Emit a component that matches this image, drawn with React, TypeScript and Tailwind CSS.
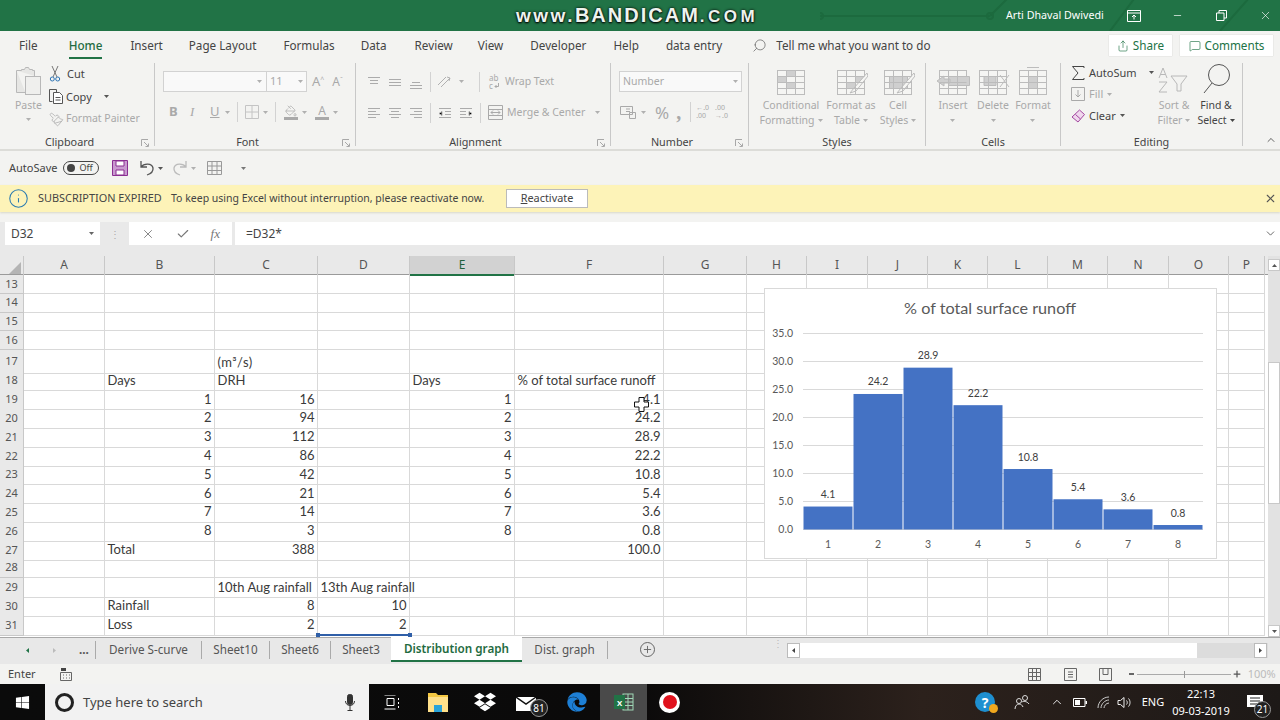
import type { ReactNode } from 'react'
import { Check, ChevronDown, ChevronUp, Info, MessageSquare, Minus, PaintBucket, Paintbrush, Plus, Search, Share, X } from 'lucide-react'
import { FaDropbox, FaEdge, FaWindows } from 'react-icons/fa'

const ui = "font-['Noto_Sans',sans-serif]"
const cellFont = "font-['Lato',sans-serif]"

function Caret({ className = 'text-[#b0b0b0]' }: { className?: string }) {
  return (
    <svg width="5" height="3" viewBox="0 0 5 3" className={`shrink-0 fill-current ${className}`}>
      <path d="M0 0h5L2.5 3z" />
    </svg>
  )
}

function Launcher() {
  return (
    <svg width="8" height="8" viewBox="0 0 8 8" className="absolute bottom-[-1px] right-[5px] fill-none stroke-[#a8a8a8]">
      <path d="M.5 7V.5H7M3 3l4 4M4.5 7.5h3v-3" />
    </svg>
  )
}

function Group({ label, width, launcher, children }: { label: string; width: string; launcher?: boolean; children: ReactNode }) {
  return (
    <div className={`relative h-[83px] shrink-0 border-r border-[#c8c8c8] ${width}`}>
      <div className="flex h-[72px]">{children}</div>
      <div className={`h-[14px] text-center text-[10.8px] leading-[14px] text-[#444] ${launcher ? 'pr-[15px]' : ''}`}>{label}</div>
      {launcher && <Launcher />}
    </div>
  )
}

function Lines({ rows }: { rows: string[] }) {
  return (
    <svg width="14" height="14" viewBox="0 0 14 14" className="shrink-0 stroke-[#ababab]">
      {rows.map((d, i) => (
        <path key={i} d={d} />
      ))}
    </svg>
  )
}

const alignLeft = ['M1 2.5h12', 'M1 5.5h8', 'M1 8.5h12', 'M1 11.5h8']
const alignCenter = ['M1 2.5h12', 'M3 5.5h8', 'M1 8.5h12', 'M3 11.5h8']
const alignRight = ['M1 2.5h12', 'M5 5.5h8', 'M1 8.5h12', 'M5 11.5h8']

// grey spreadsheet glyph used by the disabled Styles and Cells buttons
function SheetIcon({ children }: { children?: ReactNode }) {
  return (
    <svg width="34" height="28" viewBox="0 0 34 28" className="shrink-0 fill-none stroke-[#bcbcbc]">
      <rect x="3.5" y="3.5" width="27" height="24" fill="#f5f5f3" />
      {children}
      <path d="M3.5 9.5h27M3.5 15.5h27M3.5 21.5h27M12.5 3.5v24M21.5 3.5v24" />
    </svg>
  )
}

function BigButton({ lines, icon, width, margin = '', dark }: { lines: string[]; icon: ReactNode; width: string; margin?: string; dark?: boolean }) {
  return (
    <div className={`flex flex-col items-center ${width} ${margin}`}>
      <div className="flex h-[32px] items-end">{icon}</div>
      <div className={`mt-[3px] text-center text-[10.5px] leading-[15px] whitespace-nowrap ${dark ? 'text-[#444]' : 'text-[#a9a9a9]'}`}>
        {lines.map((l, i) => (
          <div key={i} className="flex h-[15px] items-center justify-center gap-[3px]">
            {l}
            {i === lines.length - 1 && <Caret className={dark ? 'text-[#444]' : 'text-[#b0b0b0]'} />}
          </div>
        ))}
      </div>
    </div>
  )
}

function TitleBar() {
  return (
    <div className="relative flex h-[31px] shrink-0 items-center bg-[#217346] text-white">
      <svg width="460" height="31" viewBox="0 0 460 31" className="absolute right-0 top-0 fill-none stroke-[#1c6a3e] stroke-2">
        <path d="M0 16h170M170 16l30-30M290 31l30-40M400 31l30-34" />
        <circle cx="0" cy="16" r="3" />
        <circle cx="170" cy="16" r="3" />
      </svg>
      <div className="relative ml-[516px] w-[250px] whitespace-nowrap font-['Liberation_Sans',sans-serif] font-bold leading-[31px] text-[#eef3ee] [text-shadow:0_0_3px_#000,0_1px_2px_#000]">
        <span className="text-[19px] tracking-[2.5px]">www.</span>
        <span className="text-[20px] tracking-[2px]">BANDICAM</span>
        <span className="text-[17px] tracking-[3.5px]">.COM</span>
      </div>
      <span className={`${ui} absolute left-[1006px] text-[10.7px]`}>Arti Dhaval Dwivedi</span>
      <svg width="14" height="12" viewBox="0 0 14 12" className="absolute left-[1127px] fill-none stroke-white">
        <path d="M.5.5h13v11H.5zM.5 3h13M7 9.5V5M5 7l2-2 2 2" />
      </svg>
      <Minus className="absolute left-[1172px] h-[11px] w-[11px]" strokeWidth={1.5} />
      <svg width="11" height="11" viewBox="0 0 11 11" className="absolute left-[1216px] fill-none stroke-white">
        <path d="M.5 3h7.5v7.5H.5zM3 3V.5h7.5V8H8" />
      </svg>
      <X className="absolute left-[1259px] h-[13px] w-[13px]" strokeWidth={1.2} />
    </div>
  )
}

function TabBar() {
  const tabs = [
    ['File', 'ml-[19px]'],
    ['Home', 'ml-[31px]'],
    ['Insert', 'ml-[28px]'],
    ['Page Layout', 'ml-[26px]'],
    ['Formulas', 'ml-[27px]'],
    ['Data', 'ml-[26px]'],
    ['Review', 'ml-[28px]'],
    ['View', 'ml-[25px]'],
    ['Developer', 'ml-[27px]'],
    ['Help', 'ml-[27px]'],
    ['data entry', 'ml-[27px]'],
  ]
  return (
    <div className="relative flex h-[29px] shrink-0 items-center text-[11.7px] text-[#444]">
      {tabs.map(([t, m]) => (
        <div key={t} className={`relative whitespace-nowrap ${m} ${t === 'Home' ? 'font-medium text-[#1f6b41]' : ''}`}>
          {t}
          {t === 'Home' && <div className="absolute bottom-[-5px] left-0 right-0 h-[2px] bg-[#217346]" />}
        </div>
      ))}
      <Search className="ml-[30px] h-[15px] w-[15px] -scale-x-100 text-[#666]" strokeWidth={1.2} />
      <span className="ml-[9px] whitespace-nowrap">Tell me what you want to do</span>
      <div className="ml-auto mr-[7px] flex gap-[8px]">
        <div className="flex h-[21px] w-[63px] items-center justify-center gap-[4px] bg-white text-[#217346] shadow-[0_0_1px_#bbb]">
          <Share className="h-[12px] w-[12px]" strokeWidth={1.3} />
          Share
        </div>
        <div className="flex h-[21px] w-[93px] items-center justify-center gap-[4px] bg-white text-[#217346] shadow-[0_0_1px_#bbb]">
          <MessageSquare className="h-[12px] w-[12px]" strokeWidth={1.3} />
          Comments
        </div>
      </div>
    </div>
  )
}

function Ribbon() {
  return (
    <div className="relative flex h-[91px] shrink-0 border-b-2 border-[#dcdcd8] pt-[3px]">
      <Group label="Clipboard" width="w-[155px]" launcher>
        <div className="flex w-[49px] flex-col items-center pl-[8px] pt-[4px]">
          <svg width="26" height="28" viewBox="0 0 26 28" className="fill-none stroke-[#b8b8b8]">
            <path d="M.5 3.5h5v-1h3l1-2h3l1 2h3v1h2V9M9.5 25.5H.5v-22" fill="#e6e6e4" />
            <rect x="9.5" y="9.5" width="15" height="18" fill="#efefed" />
          </svg>
          <div className="mt-[3px] text-[10.5px] leading-[15px] text-[#a9a9a9]">Paste</div>
          <div className="mt-[5px]"><Caret /></div>
        </div>
        <div className="flex flex-col text-[10.5px] text-[#444]">
          <div className="flex h-[22.5px] items-center gap-[4px]">
            <svg width="12" height="16" viewBox="0 0 12 16" className="fill-none">
              <path d="M3 0l5 11M9 0L4 11" stroke="#777" />
              <circle cx="3.3" cy="13" r="2" stroke="#2f75b5" />
              <circle cx="8.7" cy="13" r="2" stroke="#2f75b5" />
            </svg>
            <span className="ml-[2px] text-[11px]">Cut</span>
          </div>
          <div className="flex h-[22.5px] items-center gap-[2px]">
            <svg width="15" height="15" viewBox="0 0 15 15" className="fill-none stroke-[#555]">
              <path d="M3.5 12.5H.5V.5h7V3" />
              <path d="M4.5 3.5h6l3 3v8h-9zM6.5 8.5h5M6.5 11h5" fill="#fff" />
            </svg>
            <span className="text-[11px]">Copy</span>
            <span className="ml-[10px]"><Caret className="text-[#555]" /></span>
          </div>
          <div className="flex h-[22.5px] items-center gap-[2px] text-[#a9a9a9]">
            <Paintbrush className="h-[15px] w-[15px] -scale-x-100 text-[#b0b0b0]" strokeWidth={1.3} />
            <span>Format Painter</span>
          </div>
        </div>
      </Group>

      <Group label="Font" width="w-[201px]" launcher>
        <div className="flex flex-col pl-[8px] pt-[8px]">
          <div className="flex h-[21px] items-center">
            <div className="flex h-[21px] w-[104px] items-center justify-end border border-[#d2d2d2] bg-[#f9f9f9] pr-[4px]"><Caret /></div>
            <div className="-ml-px flex h-[21px] w-[41px] items-center justify-between border border-[#d2d2d2] bg-[#f9f9f9] px-[3px] text-[11px] text-[#a9a9a9]">11<Caret /></div>
            <span className="ml-[5px] text-[13px] text-[#a9a9a9]">A<sup className="text-[7px]">^</sup></span>
            <span className="ml-[8px] text-[12px] text-[#a9a9a9]">A<sup className="text-[7px]">ˇ</sup></span>
          </div>
          <div className="mt-[10px] flex h-[20px] items-center text-[13px] text-[#a9a9a9]">
            <span className="ml-[6px] w-[21px] font-bold">B</span>
            <span className="w-[20px] font-['Liberation_Serif',serif] italic">I</span>
            <span className="w-[15px] underline">U</span>
            <Caret />
            <span className="mx-[7px] h-[20px] w-px bg-[#d2d2d2]" />
            <svg width="14" height="14" viewBox="0 0 14 14" className="fill-none stroke-[#c4c4c4]">
              <path d="M.5.5h13v13H.5zM7 .5v13M.5 7h13" />
            </svg>
            <span className="ml-[4px]"><Caret /></span>
            <span className="mx-[7px] h-[20px] w-px bg-[#d2d2d2]" />
            <div className="flex w-[15px] flex-col items-center">
              <PaintBucket className="h-[12px] w-[12px] text-[#a9a9a9]" strokeWidth={1.4} />
              <div className="h-[3px] w-[14px] bg-[#a9a9a9]" />
            </div>
            <span className="ml-[4px]"><Caret /></span>
            <div className="ml-[8px] flex w-[14px] flex-col items-center text-[12px] leading-[12px]">
              A
              <div className="h-[3px] w-[14px] bg-[#a9a9a9]" />
            </div>
            <span className="ml-[4px]"><Caret /></span>
          </div>
        </div>
      </Group>

      <Group label="Alignment" width="w-[255px]" launcher>
        <div className="flex flex-col pl-[11px] pt-[10px]">
          <div className="flex h-[17px] items-center gap-[7px] text-[10.5px] text-[#a9a9a9]">
            <Lines rows={['M1 2.5h12', 'M3 5.5h8', 'M3 8.5h8']} />
            <Lines rows={['M1 4.5h12', 'M1 7.5h12', 'M1 10.5h12']} />
            <Lines rows={['M3 7.5h8', 'M1 10.5h12', 'M1 13.5h12']} />
            <span className="h-[20px] w-px bg-[#d2d2d2]" />
            <svg width="16" height="14" viewBox="0 0 16 14" className="-ml-[2px] fill-none stroke-[#b0b0b0]">
              <path d="M2 10L10 2M5 12l9-9M11 2l3 1-1 3" />
            </svg>
            <Caret />
            <span className="ml-[8px] h-[20px] w-px bg-[#d2d2d2]" />
            <span className="ml-[2px] flex w-[11px] flex-col text-[8px] leading-[8px] text-[#a9a9a9]">
              <span>ab</span>
              <span className="flex items-center gap-[1px]">
                c
                <svg width="5" height="6" viewBox="0 0 5 6" className="fill-none stroke-[#a9a9a9]"><path d="M4.5 0v3.500H1M2.500 2L1 3.500 2.500 5" /></svg>
              </span>
            </span>
            <span className="-ml-[2px]">Wrap Text</span>
          </div>
          <div className="mt-[14px] flex h-[17px] items-center gap-[7px] text-[10.5px] text-[#a9a9a9]">
            <Lines rows={alignLeft} />
            <Lines rows={alignCenter} />
            <Lines rows={alignRight} />
            <span className="h-[20px] w-px bg-[#d2d2d2]" />
            <Lines rows={['M1 2.5h12', 'M7 5.5h6', 'M1 7.5l3-2v4z', 'M7 8.5h6', 'M1 11.5h12']} />
            <Lines rows={['M1 2.5h12', 'M1 5.5h6', 'M13 7.5l-3-2v4z', 'M1 8.5h6', 'M1 11.5h12']} />
            <span className="h-[20px] w-px bg-[#d2d2d2]" />
            <svg width="15" height="15" viewBox="0 0 15 15" className="fill-none stroke-[#a9a9a9]">
              <path d="M.5.5h14v14H.5zM.5 4.5h14M.5 10.5h14M3 7.5h9M3 7.5l2-2M3 7.5l2 2M12 7.5l-2-2M12 7.5l-2 2" />
            </svg>
            <span className="-ml-[3px] whitespace-nowrap">Merge &amp; Center</span>
            <span className="ml-[3px]"><Caret /></span>
          </div>
        </div>
      </Group>

      <Group label="Number" width="w-[138px]" launcher>
        <div className="flex flex-col pl-[8px] pt-[8px]">
          <div className="flex h-[21px] w-[123px] items-center justify-between border border-[#d2d2d2] bg-[#f9f9f9] px-[3px] text-[10.5px] text-[#a9a9a9]">Number<Caret /></div>
          <div className="mt-[10px] flex h-[20px] items-center text-[#a9a9a9]">
            <svg width="16" height="14" viewBox="0 0 16 14" className="ml-[1px] fill-none stroke-[#a9a9a9]">
              <path d="M.5 1.5h12v8H.5zM6 4h4M6 6.5h4M9.5 7.5h6v6h-6z" />
            </svg>
            <span className="ml-[5px]"><Caret /></span>
            <span className="ml-[9px] text-[17px] leading-none">%</span>
            <span className="ml-[7px] font-['Liberation_Serif',serif] text-[20px] font-bold leading-none">,</span>
            <span className="ml-[9px] h-[20px] w-px bg-[#d2d2d2]" />
            <span className="ml-[5px] text-[7px] leading-[8px]">←.0<br />.00</span>
            <span className="ml-[6px] text-[7px] leading-[8px]">.00<br />→.0</span>
          </div>
        </div>
      </Group>

      <Group label="Styles" width="w-[177px]">
        <BigButton
          width="w-[60px]"
          margin="ml-[12px]"
          lines={['Conditional', 'Formatting']}
          icon={<SheetIcon><path d="M12.5 3.5h9v6h-9zM3.5 9.5h9v6h-9zM12.5 15.5h9v6h-9z" fill="#cfcfcf" /></SheetIcon>}
        />
        <BigButton
          width="w-[60px]"
          lines={['Format as', 'Table']}
          icon={
            <SheetIcon>
              <path d="M21.5 9.5h9v6h-9zM12.5 15.5h9v6h-9z" fill="#cfcfcf" />
              <path d="M33 6L20 21l-4 5 6-2 12-15z" fill="#f5f5f3" />
            </SheetIcon>
          }
        />
        <BigButton
          width="w-[36px]"
          margin="-ml-[1px]"
          lines={['Cell', 'Styles']}
          icon={
            <SheetIcon>
              <path d="M8.5 9.5h18v12h-18z" fill="#cfcfcf" />
              <path d="M33 6L20 21l-4 5 6-2 12-15z" fill="#f5f5f3" />
            </SheetIcon>
          }
        />
      </Group>

      <Group label="Cells" width="w-[135px]">
        <BigButton
          width="w-[40px]"
          margin="ml-[7px]"
          lines={['Insert', '']}
          icon={<SheetIcon><path d="M12.5 9.5h21v9h-21zM1 14l7-5v3h6v4H8v3z" fill="#cfcfcf" /></SheetIcon>}
        />
        <BigButton
          width="w-[40px]"
          lines={['Delete', '']}
          icon={<SheetIcon><path d="M8 9.5h12v9H8zM24 8l9 12M33 8l-9 12" fill="#cfcfcf" /></SheetIcon>}
        />
        <BigButton
          width="w-[40px]"
          lines={['Format', '']}
          icon={<SheetIcon><path d="M11 .5h12M12.5 9.5h9v12h-9z" fill="#cfcfcf" /></SheetIcon>}
        />
      </Group>

      <Group label="Editing" width="w-[182px]">
        <div className="-mt-px flex w-[94px] flex-col pl-[10px] text-[11px] text-[#444]">
          <div className="flex h-[21.5px] items-center gap-[4px]">
            <svg width="14" height="14" viewBox="0 0 14 14" className="fill-none stroke-[#444]"><path d="M13 2V.5H1.5L7 7l-5.5 6.5H13V12" /></svg>
            AutoSum
            <span className="ml-[8px]"><Caret className="text-[#555]" /></span>
          </div>
          <div className="flex h-[21.5px] items-center gap-[4px] text-[#a9a9a9]">
            <svg width="14" height="14" viewBox="0 0 14 14" className="fill-none stroke-[#a9a9a9]"><path d="M.5.5h13v13H.5zM7 3v7M4.5 7.5L7 10l2.5-2.5" /></svg>
            Fill
            <Caret />
          </div>
          <div className="flex h-[21.5px] items-center gap-[4px]">
            <svg width="14" height="14" viewBox="0 0 14 14"><path d="M8.5 1l5 4.5L7 13 1 8z" fill="#f0d8ee" stroke="#a347a0" /><path d="M4.5 5.5l5 4.5" stroke="#a347a0" /></svg>
            Clear
            <Caret className="text-[#555]" />
          </div>
        </div>
        <BigButton
          width="w-[38px]"
          lines={['Sort &', 'Filter']}
          icon={
            <svg width="34" height="30" viewBox="0 0 34 30" className="fill-none stroke-[#b8b8b8]">
              <path d="M2 13L6 3l4 10M3.5 9.5h5M2 17h8l-8 10h8M14 11h16l-6 8v7h-4v-7z" />
            </svg>
          }
        />
        <BigButton
          dark
          width="w-[44px]"
          margin="ml-[1px]"
          lines={['Find &', 'Select']}
          icon={
            <svg width="30" height="32" viewBox="0 0 30 32" className="fill-none stroke-[#555]">
              <circle cx="18" cy="12" r="10.5" />
              <path d="M11 20L3 30" />
            </svg>
          }
        />
      </Group>

      <ChevronUp className="absolute bottom-[3px] right-[3px] h-[12px] w-[12px] text-[#666]" strokeWidth={2} />
    </div>
  )
}

function QuickAccess() {
  return (
    <div className="flex h-[34px] shrink-0 items-center text-[11px] text-[#444]">
      <span className="ml-[9px]">AutoSave</span>
      <div className="ml-[6px] flex h-[14px] w-[36px] items-center rounded-full border border-[#444] px-[3px] text-[9px]">
        <span className="h-[8px] w-[8px] rounded-full bg-[#444]" />
        <span className="ml-[4px]">Off</span>
      </div>
      <svg width="16" height="16" viewBox="0 0 16 16" className="ml-[13px]">
        <path d="M.5.5h15v15H.5z" fill="#c99ad0" stroke="#8a2f91" />
        <path d="M4 1h8v5H4zM4 10h8v5H4z" fill="#fff" stroke="#8a2f91" />
      </svg>
      <svg width="16" height="16" viewBox="0 0 16 16" className="ml-[11px] fill-none stroke-[#555] stroke-[1.3]">
        <path d="M2 1v6h6M2 7c3-4 11-4 12 1 .5 4-3 6-6 7" />
      </svg>
      <span className="ml-[3px]"><Caret className="text-[#555]" /></span>
      <svg width="16" height="16" viewBox="0 0 16 16" className="ml-[9px] fill-none stroke-[#bbb] stroke-[1.3]">
        <path d="M14 1v6H8M14 7C11 3 3 3 2 8c-.5 4 3 6 6 7" />
      </svg>
      <span className="ml-[3px]"><Caret /></span>
      <svg width="15" height="14" viewBox="0 0 15 14" className="ml-[11px] fill-none stroke-[#999]">
        <path d="M.5.5h14v13H.5zM.5 5h14M.5 9.5h14M5 .5v13M10 .5v13" />
      </svg>
      <span className="ml-[19px]"><Caret className="text-[#777]" /></span>
    </div>
  )
}

function MessageBar() {
  return (
    <div className="flex h-[27px] shrink-0 items-center bg-[#fdf3b8] text-[10.9px] text-[#444] shadow-[0_1px_2px_#d8d8c8]">
      <Info className="ml-[8px] h-[21px] w-[21px] text-[#2a7ab0]" strokeWidth={1.2} />
      <span className="ml-[9px] w-[133px] whitespace-nowrap">SUBSCRIPTION EXPIRED</span>
      <span className="w-[335px] whitespace-nowrap text-[10.5px]">To keep using Excel without interruption, please reactivate now.</span>
      <div className="flex h-[19px] w-[82px] items-center justify-center border border-[#bbb] bg-white">
        <span><u>R</u>eactivate</span>
      </div>
      <X className="ml-auto mr-[3px] h-[13px] w-[13px] text-[#555]" strokeWidth={2} />
    </div>
  )
}

function FormulaBar() {
  return (
    <div className="mt-[10px] flex h-[23px] shrink-0 items-stretch bg-[#e9e9e9] text-[12px] text-[#444]">
      <div className="ml-[5px] flex w-[95px] items-center justify-between bg-white pl-[6px] pr-[6px]">
        D32
        <Caret className="text-[#666]" />
      </div>
      <div className="flex w-[29px] items-center justify-center text-[10px] leading-[4px] text-[#aaa]">⋮</div>
      <div className="flex w-[103px] items-center justify-between bg-white px-[12px] text-[#777]">
        <X className="h-[14px] w-[14px]" strokeWidth={1.5} />
        <Check className="h-[14px] w-[14px]" strokeWidth={2} />
        <span className="font-['Liberation_Serif',serif] text-[13px] italic">fx</span>
      </div>
      <div className="ml-[3px] flex flex-1 items-center justify-between bg-white pl-[11px] pr-[3px]">
        =D32*
        <ChevronDown className="h-[13px] w-[13px] text-[#555]" strokeWidth={1.6} />
      </div>
    </div>
  )
}

const gridCols = 'grid grid-cols-[24px_81px_110px_103px_92px_105px_149px_83px_60px_61px_60px_60px_60px_60px_61px_60px_36px]'
const letters = ['A', 'B', 'C', 'D', 'E', 'F', 'G', 'H', 'I', 'J', 'K', 'L', 'M', 'N', 'O', 'P']

const sheet: Record<number, string[]> = {
  17: ['', '(m³/s)'],
  18: ['Days', 'DRH', '', 'Days', '% of total surface runoff'],
  19: ['1', '16', '', '1', '4.1'],
  20: ['2', '94', '', '2', '24.2'],
  21: ['3', '112', '', '3', '28.9'],
  22: ['4', '86', '', '4', '22.2'],
  23: ['5', '42', '', '5', '10.8'],
  24: ['6', '21', '', '6', '5.4'],
  25: ['7', '14', '', '7', '3.6'],
  26: ['8', '3', '', '8', '0.8'],
  27: ['Total', '388', '', '', '100.0'],
  29: ['', '10th Aug rainfall', '13th Aug rainfall'],
  30: ['Rainfall', '8', '10'],
  31: ['Loss', '2', '2'],
}

const rowNumbers = Array.from({ length: 19 }, (_, i) => i + 13)

function Chart() {
  const data = [4.1, 24.2, 28.9, 22.2, 10.8, 5.4, 3.6, 0.8]
  const ticks = ['35.0', '30.0', '25.0', '20.0', '15.0', '10.0', '5.0', '0.0']
  return (
    <div className="absolute left-[764px] top-[32px] h-[271px] w-[453px] border border-[#d9d9d9] bg-white">
      <svg width="451" height="269" viewBox="0 0 451 269" className={cellFont}>
        <text x="225" y="25" textAnchor="middle" fontSize="16.2" fill="#595959">% of total surface runoff</text>
        {ticks.map((t, i) => (
          <g key={t}>
            <line x1="38" x2="438" y1={44.5 + i * 28} y2={44.5 + i * 28} stroke="#d9d9d9" />
            <text x="28" y={48 + i * 28} textAnchor="end" fontSize="10.5" fill="#595959">{t}</text>
          </g>
        ))}
        {data.map((v, i) => (
          <g key={i}>
            <rect x={38.5 + i * 50} y={240.5 - v * 5.6} width={49} height={v * 5.6} fill="#4472c4" />
            <text x={63 + i * 50} y={240 - v * 5.6 - 8} textAnchor="middle" fontSize="10.5" fill="#404040">{v.toFixed(1)}</text>
            <text x={63 + i * 50} y="259" textAnchor="middle" fontSize="10.5" fill="#595959">{i + 1}</text>
          </g>
        ))}
      </svg>
    </div>
  )
}

function Sheet() {
  return (
    <div className="relative flex h-[381px] shrink-0 overflow-hidden bg-white">
      <div className="relative w-[1268px] shrink-0">
        <div className={`${gridCols} ${ui} h-[19px] border-b border-[#9a9a9a] bg-[#e9e9e9] text-[12px] leading-[18px] text-[#555]`}>
          <div className="flex items-end justify-end border-r border-[#c8c8c8] p-[2px]">
            <svg width="12" height="12" viewBox="0 0 12 12"><path d="M12 0v12H0z" fill="#b4b4b4" /></svg>
          </div>
          {letters.map((l) => (
            <div key={l} className={`border-r border-[#c8c8c8] text-center ${l === 'E' ? 'border-b-2 border-b-[#217346] bg-[#d2d2d2] text-[#1f5f3b]' : ''}`}>{l}</div>
          ))}
        </div>
        <div className={`${cellFont} text-[13px] text-[#3a3a3a]`}>
          {rowNumbers.map((n) => {
            const vals = sheet[n] ?? []
            return (
              <div key={n} className={`${gridCols} ${n === 17 ? 'h-[20.7px]' : 'h-[18.8px]'}`}>
                <div className={`${ui} flex items-center justify-center border-b border-r border-[#c8c8c8] bg-[#e9e9e9] text-[11px] text-[#555]`}>{n}</div>
                {letters.map((l, i) => {
                  const v = vals[i - 1] ?? ''
                  const numeric = /^[\d.]+$/.test(v)
                  return (
                    <div key={l} className={`flex items-center whitespace-nowrap border-b border-r border-[#d9d9d9] px-[2.5px] ${numeric ? 'justify-end' : ''} ${n === 17 ? 'pt-[3px] tracking-[0.4px]' : ''}`}>{v}</div>
                  )
                })}
              </div>
            )
          })}
        </div>
        <Chart />
        {/* selection edge of D32 and the fill handles */}
        <div className="absolute left-[318px] top-[378px] h-[2px] w-[92px] bg-[#2f5fa8]" />
        <div className="absolute left-[316px] top-[377px] h-[4px] w-[4px] bg-[#2f5fa8]" />
        <div className="absolute left-[408px] top-[377px] h-[4px] w-[4px] bg-[#2f5fa8]" />
        <svg width="15" height="15" viewBox="0 0 15 15" className="absolute left-[634px] top-[141px]">
          <path d="M5 .5h5V5h4.5v5H10v4.5H5V10H.5V5H5z" fill="#fff" stroke="#111" />
        </svg>
      </div>
      <div className="flex w-[12px] flex-col bg-[#e2e2e2] pt-[3px]">
        <div className="flex h-[12px] items-center justify-center border border-[#c8c8c8] bg-white"><Caret className="rotate-180 text-[#555]" /></div>
        <div className="mt-[91px] h-[142px] border border-[#c8c8c8] bg-white" />
        <div className="mt-auto flex h-[12px] items-center justify-center border border-[#c8c8c8] bg-white"><Caret className="text-[#555]" /></div>
      </div>
    </div>
  )
}

function SheetTabs() {
  const tabs = [
    ['Derive S-curve', 'w-[106px]'],
    ['Sheet10', 'w-[68px]'],
    ['Sheet6', 'w-[61px]'],
    ['Sheet3', 'w-[61px]'],
  ]
  return (
    <div className="flex h-[27px] shrink-0 items-start border-t border-[#a8a8a8] bg-[#e8e8e8] text-[11.7px] text-[#555]">
      <div className="flex h-[24px] w-[95px] items-center">
        <Caret className="ml-[25px] rotate-90 text-[#217346]" />
        <Caret className="ml-[22px] -rotate-90 text-[#bbb]" />
        <span className="ml-[22px] font-bold leading-none">...</span>
      </div>
      {tabs.map(([t, w]) => (
        <div key={t} className={`mt-[3px] flex h-[18px] items-center justify-center whitespace-nowrap border-l border-[#aaa] ${w}`}>{t}</div>
      ))}
      <div className="-mt-px flex h-[25px] w-[131px] items-center justify-center border-b-2 border-[#217346] bg-white font-semibold text-[#1f6b41]">Distribution graph</div>
      <div className="mt-[3px] flex h-[18px] w-[86px] items-center justify-center border-r border-[#aaa]">Dist. graph</div>
      <div className="ml-[32px] mt-[4px] flex h-[15px] w-[15px] items-center justify-center rounded-full border border-[#666]"><Plus className="h-[11px] w-[11px] text-[#666]" /></div>
      <span className="ml-[118px] mt-[3px] text-[10px] leading-[5px] text-[#bbb]">⋮</span>
      <div className="ml-[4px] mt-[5px] flex h-[15px] w-[481px] items-stretch bg-[#dcdcdc]">
        <div className="flex w-[13px] items-center justify-center border border-[#bbb] bg-white"><Caret className="rotate-90 text-[#444]" /></div>
        <div className="w-[397px] bg-white" />
        <div className="ml-auto mr-[1px] flex w-[13px] items-center justify-center border border-[#bbb] bg-white"><Caret className="-rotate-90 text-[#444]" /></div>
      </div>
    </div>
  )
}

function StatusBar() {
  return (
    <div className="flex h-[20px] shrink-0 items-center bg-[#f3f3f1] text-[11px] text-[#444]">
      <span className="ml-[8px]">Enter</span>
      <svg width="12" height="13" viewBox="0 0 12 13" className="ml-[24px] fill-none stroke-[#666]">
        <path d="M.5 4.5h11v8H.5zM3 7h1M6 7h1M9 7h1M3 10h1M6 10h1M9 10h1" />
        <rect x="1" y="0" width="5" height="3" fill="#444" stroke="none" />
      </svg>
      <svg width="13" height="13" viewBox="0 0 13 13" className="ml-[956px] fill-none stroke-[#666]">
        <path d="M.5.5h12v12H.5zM4.5.5v12M8.5.5v12M.5 4.5h12M.5 8.5h12" />
      </svg>
      <svg width="13" height="13" viewBox="0 0 13 13" className="ml-[23px] fill-none stroke-[#666]">
        <path d="M.5.5h12v12H.5zM4 4h5M4 6.5h5M4 9h5" />
      </svg>
      <svg width="13" height="13" viewBox="0 0 13 13" className="ml-[22px] fill-none stroke-[#666]">
        <path d="M.5.5h12v12H.5zM4 .5v6h5v-6" />
      </svg>
      <span className="ml-[17px] h-[2px] w-[5px] bg-[#666]" />
      <div className="relative ml-[3px] h-px w-[94px] bg-[#aaa]">
        <div className="absolute left-[47px] top-[-3px] h-[7px] w-px bg-[#999]" />
      </div>
      <Plus className="ml-[1px] h-[10px] w-[10px] text-[#555]" strokeWidth={3} />
      <span className="ml-[6px] text-[#bbb]">100%</span>
    </div>
  )
}

function TaskIcon({ children, active }: { children: ReactNode; active?: boolean }) {
  return <div className={`relative flex h-[36px] w-[46.3px] shrink-0 items-center justify-center ${active ? 'bg-[#4a4a4a]' : ''}`}>{children}</div>
}

function Taskbar() {
  return (
    <div className={`${ui} flex h-[36px] shrink-0 items-center bg-[linear-gradient(90deg,#0b0b0b_0%,#0b0a0a_50%,#2c211c_72%,#1d1917_100%)] text-white`}>
      <div className="flex w-[45px] justify-center"><FaWindows className="h-[15px] w-[15px]" /></div>
      <div className="flex h-[36px] w-[324px] items-center bg-[#f2f2f2] text-[13px] text-[#444]">
        <span className="ml-[10px] h-[19px] w-[19px] rounded-full border-[3px] border-[#222]" />
        <span className="ml-[9px] mt-[2px]">Type here to search</span>
        <svg width="10" height="17" viewBox="0 0 10 17" className="ml-auto mr-[14px] fill-none stroke-[#333]">
          <rect x="2.5" y=".5" width="5" height="10" rx="2" fill="#333" />
          <path d="M.5 7c0 6 9 6 9 0M5 12v4M2.5 16.5h5" />
        </svg>
      </div>
      <TaskIcon>
        <svg width="16" height="15" viewBox="0 0 16 15" className="fill-none stroke-white">
          <path d="M.5 0h11M3 3.5h7v7H3zM.5 14h11M14.5 3v2M14.5 7v2M14.5 11v2" />
        </svg>
      </TaskIcon>
      <TaskIcon>
        <svg width="20" height="20" viewBox="0 0 20 20">
          <path d="M0 1h8l2 2h10v17H0z" fill="#f5c842" />
          <path d="M0 5h20v15H0z" fill="#ffe08a" />
          <path d="M6 13h8v7H6z" fill="#2aa3d8" />
        </svg>
      </TaskIcon>
      <TaskIcon><FaDropbox className="h-[22px] w-[22px]" /></TaskIcon>
      <TaskIcon>
        <svg width="24" height="20" viewBox="0 0 24 20" className="-ml-[6px]">
          <path d="M0 5h20v14H0z" fill="#fff" />
          <path d="M0 5l10 7 10-7" fill="none" stroke="#111" strokeWidth="1.5" />
        </svg>
        <span className="absolute left-[22px] top-[15px] flex h-[18px] w-[18px] items-center justify-center rounded-full border border-[#999] bg-[#222] text-[10px]">81</span>
      </TaskIcon>
      <TaskIcon><FaEdge className="h-[20px] w-[20px] text-[#1d7fd6]" /></TaskIcon>
      <TaskIcon active>
        <svg width="20" height="18" viewBox="0 0 20 18" className={cellFont}>
          <rect x="9" y="1" width="10" height="16" fill="none" stroke="#9fd8b6" />
          <path d="M9 5.5h10M9 9h10M9 12.5h10M14 1v16" stroke="#9fd8b6" />
          <rect x="0" y="2" width="11" height="14" fill="#217346" />
          <text x="5.5" y="13" textAnchor="middle" fontSize="10" fontWeight="700" fill="#fff">x</text>
        </svg>
      </TaskIcon>
      <TaskIcon>
        <span className="flex h-[21px] w-[21px] items-center justify-center rounded-full bg-white">
          <span className="h-[14px] w-[14px] rounded-full bg-[#e0121d]" />
        </span>
      </TaskIcon>
      <div className="ml-auto flex h-[36px] w-[310px] items-center text-[11.5px]">
        <div className="relative flex w-[30px] justify-center">
          <span className="flex h-[20px] w-[20px] items-center justify-center rounded-full bg-[#1e8fd0] text-[14px] font-bold">?</span>
          <span className="absolute bottom-[-1px] right-[2px] h-[9px] w-[9px] rounded-full bg-[#f1a81e]" />
        </div>
        <div className="flex w-[44px] justify-center">
          <svg width="16" height="16" viewBox="0 0 16 16" className="fill-none stroke-[#ddd]">
            <circle cx="11" cy="4" r="2.5" /><circle cx="5" cy="7" r="2.5" /><path d="M1 15c0-3 2-5 4-5s3 1 4 3M8 8c1-1 5-1 7 2" />
          </svg>
        </div>
        <div className="flex w-[26px] justify-center"><ChevronUp className="h-[14px] w-[14px]" strokeWidth={1.5} /></div>
        <div className="flex w-[20px] justify-center">
          <svg width="14" height="9" viewBox="0 0 14 9"><path d="M.5.5h11.5v8H.5z" fill="none" stroke="#fff" /><path d="M2 2h5v5H2zM12.5 3H14v3h-1.5z" fill="#fff" /></svg>
        </div>
        <div className="ml-[2px] flex w-[22px] justify-center">
          <svg width="13" height="13" viewBox="0 0 13 13" className="fill-none stroke-[#ccc]"><path d="M1 12C1 6 6 1 12 1M4 12c0-4 4-8 8-8M7 12c0-2 2-5 5-5" /></svg>
        </div>
        <div className="flex w-[20px] justify-center">
          <svg width="15" height="13" viewBox="0 0 15 13" className="fill-none stroke-[#eee]"><path d="M1 4.5h2.5L7 1.5v10l-3.5-3H1zM9.5 4.500c1 1 1 3 0 4M11.500 2.500c2 2 2 6 0 8" /></svg>
        </div>
        <div className="w-[38px] text-center text-[11px]">ENG</div>
        <div className="w-[58px] text-center text-[11px] leading-[17px]">22:13<br />09-03-2019</div>
        <div className="relative flex w-[50px] justify-center">
          <svg width="16" height="15" viewBox="0 0 16 15"><path d="M0 0h16v12H0z" fill="#fff" /><path d="M3 3h10M3 6h10M3 9h7" stroke="#222" /></svg>
          <span className="absolute left-[24px] top-[6px] flex h-[17px] w-[17px] items-center justify-center rounded-full border border-[#999] bg-[#222] text-[10px]">21</span>
        </div>
      </div>
    </div>
  )
}

export default function App() {
  return (
    <div className={`${ui} relative flex h-[720px] w-[1280px] flex-col overflow-hidden bg-[#f3f3f1]`}>
      <TitleBar />
      <TabBar />
      <Ribbon />
      <QuickAccess />
      <MessageBar />
      <FormulaBar />
      <div className="h-[11px] shrink-0 bg-[#e9e9e9]" />
      <Sheet />
      <SheetTabs />
      <StatusBar />
      <Taskbar />
    </div>
  )
}
